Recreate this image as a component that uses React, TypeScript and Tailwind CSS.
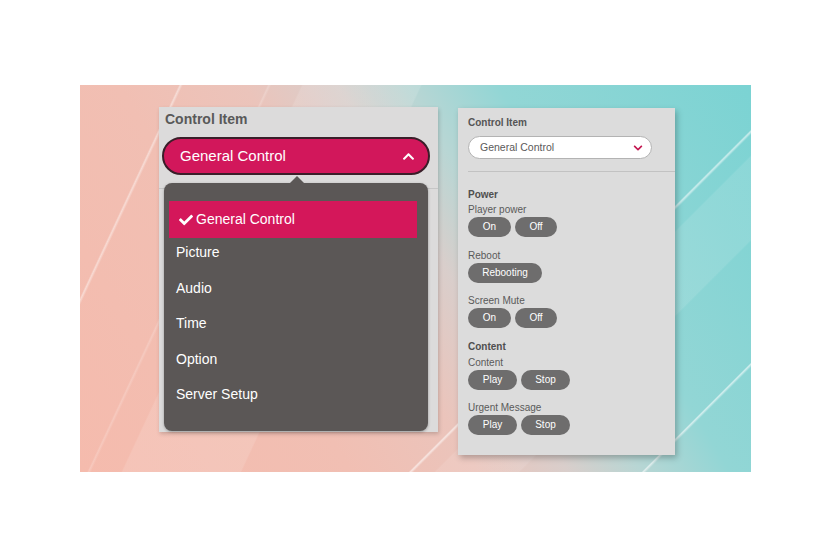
import { FaCheck, FaChevronDown, FaChevronUp } from "react-icons/fa";

const menuItems = ["Picture", "Audio", "Time", "Option", "Server Setup"];

function Pill({ label, w }: { label: string; w: string }) {
  return (
    <button
      className={
        "h-[20px] rounded-full bg-[#6e6d6d] text-white text-[10px] leading-none grid place-items-center " + w
      }
    >
      {label}
    </button>
  );
}

function Label({ text, bold }: { text: string; bold?: boolean }) {
  return (
    <div className={"text-[10px] leading-[14px] " + (bold ? "font-bold text-[#4f4f4f]" : "text-[#5a5a5a]")}>
      {text}
    </div>
  );
}

export default function App() {
  return (
    <div className="w-[839px] h-[559px] bg-white pt-[85px] pl-[80px] font-['Liberation_Sans',Arial,sans-serif]">
      <div className="w-[671px] h-[387px] flex items-start pl-[79px] pt-[22px] bg-[linear-gradient(135deg,transparent_67.6%,rgba(255,255,255,0.6)_67.8%,transparent_68.1%),linear-gradient(135deg,transparent_89.6%,rgba(255,255,255,0.6)_89.8%,transparent_90.1%),linear-gradient(115deg,transparent_11.6%,rgba(255,255,255,0.45)_11.8%,transparent_12.1%),linear-gradient(115deg,transparent_22%,rgba(255,255,255,0.2)_22.2%,transparent_22.5%),linear-gradient(135deg,transparent_70%,rgba(255,255,255,0.1)_70.2%,rgba(255,255,255,0.1)_78%,transparent_78.2%),linear-gradient(115deg,transparent_26%,rgba(255,255,255,0.12)_26.2%,rgba(255,255,255,0.12)_40%,transparent_40.2%),linear-gradient(59deg,#f5bbad_0%,#f1bfb3_30%,#ebc4bb_44%,#d9cecb_54%,#b8d6d4_62%,#92d6d5_72%,#7bd3d3_100%)]">
        {/* Left panel: opened dropdown */}
        <div className="relative w-[279px] h-[325px] bg-[#dcdbdb] shadow-[1px_2px_4px_rgba(0,0,0,0.18)]">
          <div className="pt-[4px] pl-[6px] text-[14px] leading-[16px] font-bold text-[#595959]">Control Item</div>
          <div className="mt-[10px] ml-[3px] mr-[8px] h-[38px] rounded-full bg-[#d2175b] border-2 border-[#3a1e29] flex items-center justify-between pl-[16px] pr-[13px]">
            <span className="text-white text-[15px]">General Control</span>
            <FaChevronUp className="text-white text-[13px]" />
          </div>
          <div className="mt-[13px] h-px bg-[#c6c6c6]" />

          <div className="absolute top-[76px] left-[5px] w-[264px] h-[248px] rounded-[8px] bg-[#5b5756] shadow-[0_1px_3px_rgba(0,0,0,0.3)]">
            <div className="absolute -top-[7px] left-[126px] w-0 h-0 border-l-[7px] border-r-[7px] border-b-[7px] border-l-transparent border-r-transparent border-b-[#5b5756]" />
            <div className="mt-[18px] ml-[5px] mr-[11px] h-[37px] bg-[#d4175a] flex items-center pl-[10px] gap-[3px] text-white text-[14px]">
              <FaCheck className="text-[14px]" />
              <span>General Control</span>
            </div>
            <div className="-mt-[3px]">
              {menuItems.map((m) => (
                <div key={m} className="h-[35.5px] flex items-center pl-[12px] text-white text-[14px]">
                  {m}
                </div>
              ))}
            </div>
          </div>
        </div>

        {/* Right panel: control settings */}
        <div className="ml-[20px] mt-[1px] w-[217px] h-[347px] bg-[#dcdcdc] shadow-[2px_3px_6px_rgba(0,0,0,0.25)] px-[10px] pt-[8px]">
          <div className="text-[10px] leading-[14px] font-bold text-[#555]">Control Item</div>
          <div className="mt-[6px] w-[184px] h-[23px] rounded-full bg-white border border-[#b3b3b3] flex items-center justify-between pl-[11px] pr-[8px]">
            <span className="text-[10.5px] text-[#5a5a5a]">General Control</span>
            <FaChevronDown className="text-[#c3154f] text-[10px]" />
          </div>
          <div className="mt-[12px] -mr-[10px] h-px bg-[#c2c2c2]" />

          <div className="mt-[16px]">
            <Label text="Power" bold />
            <div className="mt-[1px]">
              <Label text="Player power" />
            </div>
            <div className="flex gap-[4px]">
              <Pill label="On" w="w-[43px]" />
              <Pill label="Off" w="w-[42px]" />
            </div>
          </div>

          <div className="mt-[12px]">
            <Label text="Reboot" />
            <Pill label="Rebooting" w="w-[74px]" />
          </div>

          <div className="mt-[11px]">
            <Label text="Screen Mute" />
            <div className="flex gap-[4px]">
              <Pill label="On" w="w-[43px]" />
              <Pill label="Off" w="w-[42px]" />
            </div>
          </div>

          <div className="mt-[12px]">
            <Label text="Content" bold />
            <div className="mt-[2px]">
              <Label text="Content" />
            </div>
            <div className="flex gap-[4px]">
              <Pill label="Play" w="w-[49px]" />
              <Pill label="Stop" w="w-[49px]" />
            </div>
          </div>

          <div className="mt-[11px]">
            <Label text="Urgent Message" />
            <div className="flex gap-[4px]">
              <Pill label="Play" w="w-[49px]" />
              <Pill label="Stop" w="w-[49px]" />
            </div>
          </div>
        </div>
      </div>
    </div>
  );
}
